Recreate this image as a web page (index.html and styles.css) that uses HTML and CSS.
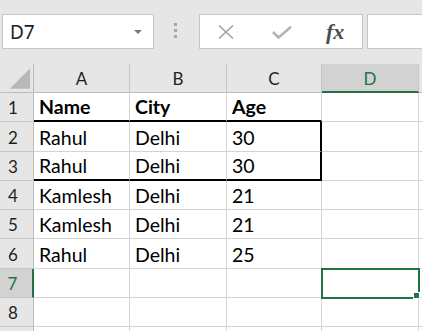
FILE: index.html
```html
<!DOCTYPE html>
<html>
<head>
    <meta charset='utf-8'>
    <title>Planilha</title>
    <meta name='viewport' content='width=device-width, initial-scale=1'>
    <link rel="stylesheet" href="styles.css">
</head>
<body>
    <header class="toolbar">
        <div class="namebox">
            <span class="cellref">D7</span>
            <span class="caret"></span>
        </div>
        <div class="grip"><i></i><i></i><i></i></div>
        <div class="fxbuttons">
            <svg class="ico-cancel" width="16" height="14" viewBox="0 0 16 14">
                <path d="M1 0.5 L15 13.5 M15 0.5 L1 13.5" stroke="#a3a3a3" stroke-width="1.6" fill="none"/>
            </svg>
            <svg class="ico-enter" width="20" height="13" viewBox="0 0 20 13">
                <path d="M1 6 L6.5 11.5 L19 0.8" stroke="#b3b3b3" stroke-width="2.6" fill="none"/>
            </svg>
            <span class="fx">fx</span>
        </div>
        <div class="formula"></div>
    </header>

    <div class="sheet">
        <!-- cabeçalho das colunas -->
        <div class="corner">
            <svg width="34" height="28" viewBox="0 0 34 28"><polygon points="31,4 31,25 10,25" fill="#b8b8b8"/></svg>
        </div>
        <div class="colhead">A</div>
        <div class="colhead">B</div>
        <div class="colhead">C</div>
        <div class="colhead active">D</div>
        <div class="colhead"></div>

        <div class="rowhead">1</div>
        <div class="cell bold boxtop">Name</div>
        <div class="cell bold boxtop">City</div>
        <div class="cell bold boxtop">Age</div>
        <div class="cell"></div>
        <div class="cell"></div>

        <div class="rowhead">2</div>
        <div class="cell">Rahul</div>
        <div class="cell">Delhi</div>
        <div class="cell boxright">30</div>
        <div class="cell"></div>
        <div class="cell"></div>

        <div class="rowhead">3</div>
        <div class="cell boxbottom">Rahul</div>
        <div class="cell boxbottom">Delhi</div>
        <div class="cell boxbottom boxright">30</div>
        <div class="cell"></div>
        <div class="cell"></div>

        <div class="rowhead">4</div>
        <div class="cell">Kamlesh</div>
        <div class="cell">Delhi</div>
        <div class="cell">21</div>
        <div class="cell"></div>
        <div class="cell"></div>

        <div class="rowhead">5</div>
        <div class="cell">Kamlesh</div>
        <div class="cell">Delhi</div>
        <div class="cell">21</div>
        <div class="cell"></div>
        <div class="cell"></div>

        <div class="rowhead">6</div>
        <div class="cell">Rahul</div>
        <div class="cell">Delhi</div>
        <div class="cell">25</div>
        <div class="cell"></div>
        <div class="cell"></div>

        <div class="rowhead active">7</div>
        <div class="cell"></div>
        <div class="cell"></div>
        <div class="cell"></div>
        <div class="cell selected"></div>
        <div class="cell"></div>

        <div class="rowhead">8</div>
        <div class="cell"></div>
        <div class="cell"></div>
        <div class="cell"></div>
        <div class="cell"></div>
        <div class="cell"></div>

        <!-- linha 9 só aparece uns pixels, sem número visível -->
        <div class="rowhead"></div>
        <div class="cell"></div>
        <div class="cell"></div>
        <div class="cell"></div>
        <div class="cell"></div>
        <div class="cell"></div>
    </div>
</body>
</html>
```

FILE: styles.css
```css
html, body {
    margin: 0;
    padding: 0;
    height: 100%;
    overflow: hidden;
    background-color: #e6e6e6;
}
.toolbar {
    display: flex;
    align-items: flex-start;
    box-sizing: border-box;
    height: 64px;
    padding: 14px 0 0 2px;
}
.namebox {
    display: flex;
    align-items: center;
    box-sizing: border-box;
    width: 152px;
    height: 35px;
    padding-left: 7px;
    background-color: #fff;
    border: 1px solid #c6c6c6;
}
.cellref {
    font-family: 'Noto Sans', sans-serif;
    font-size: 19px;
    color: #1e1e1e;
}
.caret {
    width: 0;
    height: 0;
    margin: 0 11px 0 auto;
    border-left: 4px solid transparent;
    border-right: 4px solid transparent;
    border-top: 4px solid #7a7a7a;
}
.grip {
    display: flex;
    flex-direction: column;
    gap: 3px;
    margin: 9px 0 0 20px;
}
.grip i {
    width: 3px;
    height: 3px;
    background-color: #a6a6a6;
}
.fxbuttons {
    display: flex;
    align-items: center;
    box-sizing: border-box;
    width: 164px;
    height: 35px;
    margin-left: 22px;
    padding-left: 18px;
    background-color: #fff;
    border: 1px solid #c6c6c6;
}
.ico-enter {
    margin: 2px 0 0 38px;
}
.fx {
    margin-left: 34px;
    font-family: 'Liberation Serif', serif;
    font-style: italic;
    font-weight: 700;
    font-size: 22px;
    color: #4d4d4d;
}
.formula {
    flex: 1;
    box-sizing: border-box;
    height: 35px;
    margin-left: 4px;
    background-color: #fff;
    border: 1px solid #c6c6c6;
    border-right: none;
}

.sheet {
    display: grid;
    grid-template-columns: 34px 96px 97px 95px 97px 1fr;
    grid-template-rows: 29px repeat(9, 29.3px);
    font-family: Lato, sans-serif;
}
.sheet > div {
    box-sizing: border-box;
    display: flex;
    align-items: flex-end;
    white-space: nowrap;
    overflow: hidden;
}
.corner {
    background-color: #e6e6e6;
    border-right: 1px solid #bdbdbd;
    border-bottom: 1px solid #bdbdbd;
}
.colhead {
    justify-content: center;
    padding-bottom: 3px;
    background-color: #e6e6e6;
    border-right: 1px solid #c6c6c6;
    border-bottom: 1px solid #bdbdbd;
    font-size: 17px;
    color: #1f1f1f;
}
.colhead.active {
    background-color: #d2d2d2;
    border-bottom: 2px solid #217346;
    padding-bottom: 2px;
    color: #217346;
}
.rowhead {
    justify-content: center;
    padding: 0 7px 3px 0;
    background-color: #e6e6e6;
    border-right: 1px solid #bdbdbd;
    border-bottom: 1px solid #c6c6c6;
    font-size: 17px;
    color: #1f1f1f;
}
.rowhead.active {
    background-color: #d2d2d2;
    border-right: 2px solid #217346;
    color: #217346;
}
.cell {
    padding: 0 5px 2px;
    background-color: #fff;
    border-right: 1px solid #d4d4d4;
    border-bottom: 1px solid #d4d4d4;
    font-size: 19.5px;
    color: #000;
}
.bold {
    font-weight: 700;
}
.boxtop, .boxbottom {
    border-bottom: 2px solid #000;
}
.boxright {
    border-right: 2px solid #000;
}
.sheet > .selected {
    position: relative;
    overflow: visible;
    outline: 2px solid #217346;
    outline-offset: -1px;
}
.selected::after {
    content: "";
    position: absolute;
    right: -2px;
    bottom: -2px;
    width: 5px;
    height: 5px;
    background-color: #217346;
    border: 1px solid #fff;
}
```
